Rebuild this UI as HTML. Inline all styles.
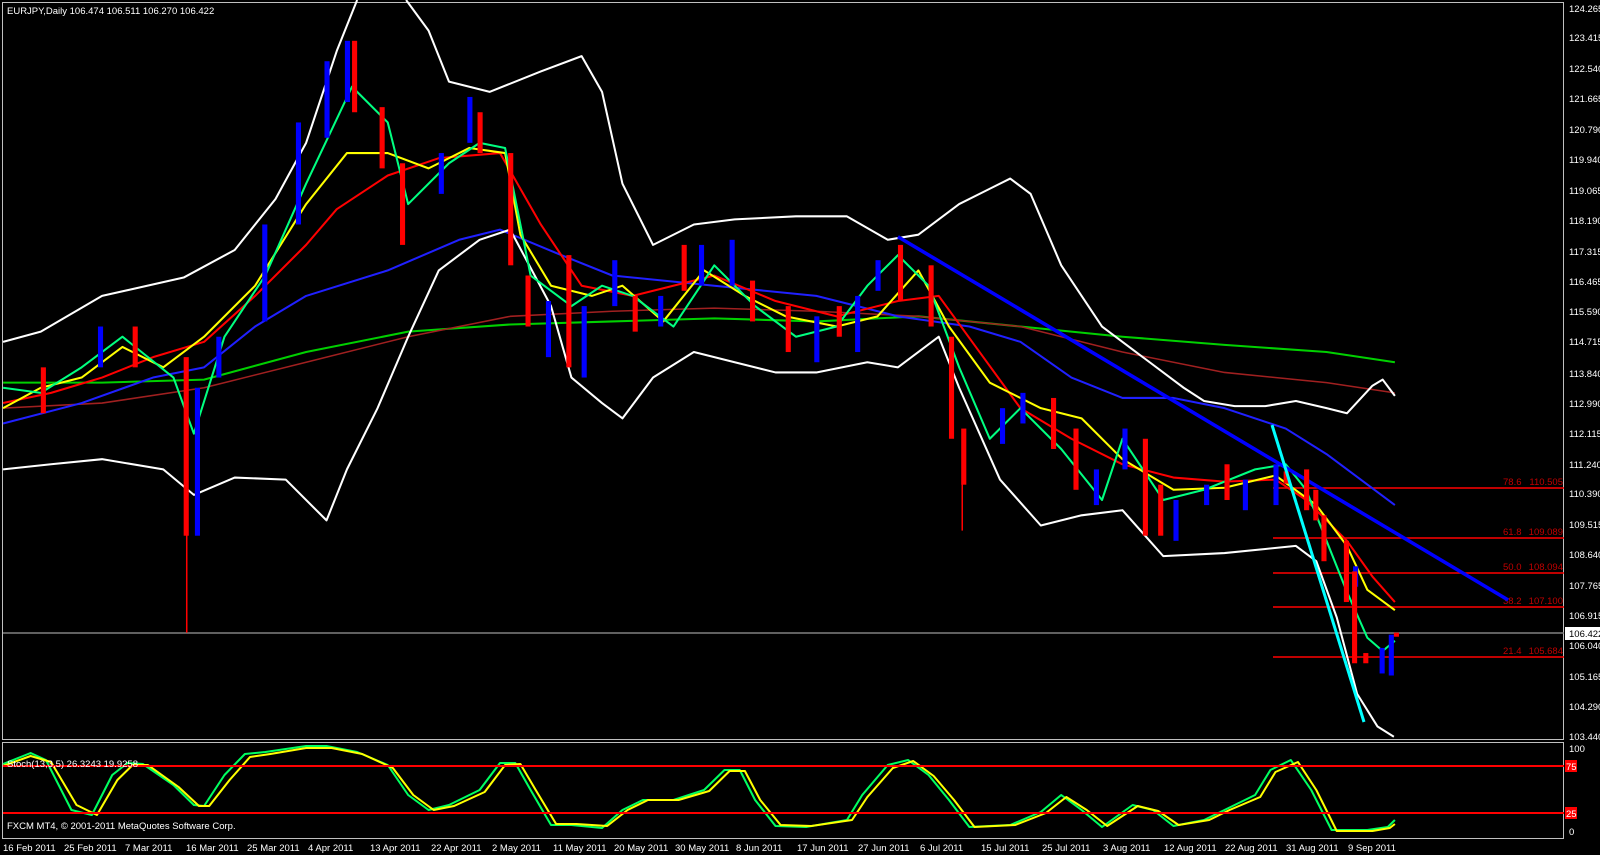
<!DOCTYPE html>
<html><head><meta charset="utf-8"><style>
html,body{margin:0;padding:0;background:#000;}
svg{display:block;}
text{font-family:"Liberation Sans",sans-serif;font-size:9.5px;fill:#fff;}
</style></head><body>
<svg width="1600" height="855" viewBox="0 0 1600 855" xmlns="http://www.w3.org/2000/svg">
<rect width="1600" height="855" fill="#000"/>
<rect x="2.5" y="2.5" width="1561" height="737" fill="none" stroke="#c0c0c0"/>
<rect x="2.5" y="742.5" width="1561" height="96" fill="none" stroke="#c0c0c0"/>
<line x1="3" y1="633" x2="1564" y2="633" stroke="#808080" stroke-width="1.5"/>
<g stroke="#ff0000" stroke-width="1.5">
<line x1="1273" y1="488" x2="1564" y2="488"/>
<line x1="1273" y1="538" x2="1564" y2="538"/>
<line x1="1273" y1="573" x2="1564" y2="573"/>
<line x1="1273" y1="607" x2="1564" y2="607"/>
<line x1="1273" y1="657" x2="1564" y2="657"/>
</g>
<g>
<text x="1503" y="485" style="fill:#c00000">78.6</text><text x="1563" y="485" text-anchor="end" style="fill:#c00000">110.505</text>
<text x="1503" y="535" style="fill:#c00000">61.8</text><text x="1563" y="535" text-anchor="end" style="fill:#c00000">109.089</text>
<text x="1503" y="570" style="fill:#c00000">50.0</text><text x="1563" y="570" text-anchor="end" style="fill:#c00000">108.094</text>
<text x="1503" y="604" style="fill:#c00000">38.2</text><text x="1563" y="604" text-anchor="end" style="fill:#c00000">107.100</text>
<text x="1503" y="654" style="fill:#c00000">21.4</text><text x="1563" y="654" text-anchor="end" style="fill:#c00000">105.684</text>
</g>
<g transform="scale(1.0204)">
<g fill="none" stroke-linejoin="round">
<polyline stroke="#00d000" stroke-width="2" points="3,375 100,375 200,372 300,345 400,325 500,318 600,315 700,312 800,315 900,310 950,315 1000,320 1100,330 1200,338 1300,345 1367,355"/>
<polyline stroke="#a02020" stroke-width="1.5" points="3,400 100,395 200,380 300,355 400,330 500,310 600,305 700,302 800,305 900,310 1000,320 1100,345 1200,365 1300,375 1367,385"/>
<polyline stroke="#2020ff" stroke-width="2" points="3,415 80,395 150,370 200,360 250,320 300,290 380,265 450,235 490,225 550,250 600,270 700,280 800,290 880,310 950,320 1000,335 1050,370 1100,390 1150,390 1200,400 1260,420 1300,445 1367,495"/>
<polyline stroke="#fff" stroke-width="2" points="3,335 40,325 100,290 180,272 230,245 270,195 300,140 330,50 350,0"/>
<polyline stroke="#fff" stroke-width="2" points="398,0 420,30 440,80 480,90 530,70 570,55 590,90 610,180 640,240 680,220 720,215 780,212 830,212 870,235 900,230 940,200 970,185 990,175 1010,190 1040,260 1080,320 1120,350 1160,380 1180,393 1210,398 1240,398 1270,393 1300,400 1320,405 1345,378 1355,372 1367,388"/>
<polyline stroke="#fff" stroke-width="2" points="3,460 50,455 100,450 160,460 190,485 230,468 280,470 320,510 340,460 370,400 400,330 430,265 470,235 500,225 540,300 560,370 590,395 610,410 640,370 680,345 720,355 760,365 800,365 850,355 880,360 920,330 940,380 980,470 1020,515 1060,505 1100,500 1140,545 1200,542 1240,538 1270,535 1290,550 1310,605 1330,680 1350,712 1366,722"/>
<polyline stroke="#ff0000" stroke-width="2" points="3,395 50,385 100,370 150,350 200,335 250,290 300,240 330,205 380,172 430,155 490,150 530,220 570,280 620,290 700,270 760,295 820,310 880,295 920,290 960,345 1000,400 1050,430 1100,455 1150,468 1200,472 1250,470 1280,490 1320,530 1345,565 1367,590"/>
<polyline stroke="#ffff00" stroke-width="2" points="3,400 40,380 80,370 120,340 160,360 200,330 250,280 300,200 340,150 380,150 420,165 460,145 495,150 510,230 540,280 580,290 610,280 650,315 690,265 730,290 770,310 820,320 860,310 900,265 930,320 970,375 1020,400 1060,410 1100,450 1150,480 1200,478 1250,466 1290,495 1320,535 1340,578 1367,598"/>
<polyline stroke="#00ff80" stroke-width="2" points="3,380 40,385 80,360 120,330 170,370 190,425 220,330 260,270 300,180 345,85 380,120 400,200 440,160 470,140 495,145 520,270 560,300 590,280 620,290 660,320 700,260 740,300 780,330 820,320 850,280 880,250 910,280 940,360 970,430 1000,400 1040,440 1080,490 1100,430 1140,490 1180,480 1230,460 1260,455 1280,480 1300,530 1320,580 1340,625 1355,638 1367,628"/>
<line x1="880" y1="232" x2="1478" y2="588" stroke="#0000ff" stroke-width="3.5"/>
</g>
<g fill="#0000ff">
<rect x="96" y="320" width="5" height="40"/><rect x="191" y="380" width="5" height="145"/><rect x="212" y="330" width="5" height="40"/><rect x="257" y="220" width="5" height="95"/><rect x="290" y="120" width="5" height="100"/><rect x="318" y="60" width="5" height="75"/><rect x="338" y="40" width="5" height="60"/><rect x="430" y="150" width="5" height="40"/><rect x="458" y="95" width="5" height="45"/><rect x="535" y="295" width="5" height="55"/><rect x="570" y="300" width="5" height="70"/><rect x="600" y="255" width="5" height="45"/><rect x="645" y="290" width="5" height="30"/><rect x="685" y="240" width="5" height="40"/><rect x="715" y="235" width="5" height="45"/><rect x="798" y="310" width="5" height="45"/><rect x="838" y="290" width="5" height="55"/><rect x="858" y="255" width="5" height="30"/><rect x="980" y="400" width="5" height="35"/><rect x="1000" y="385" width="5" height="30"/><rect x="1072" y="460" width="5" height="35"/><rect x="1100" y="420" width="5" height="40"/><rect x="1150" y="490" width="5" height="40"/><rect x="1180" y="475" width="5" height="20"/><rect x="1218" y="470" width="5" height="30"/><rect x="1248" y="455" width="5" height="40"/><rect x="1326" y="555" width="5" height="20"/><rect x="1352" y="635" width="5" height="25"/><rect x="1361" y="622" width="5" height="40"/>
</g>
<g fill="#ff0000">
<rect x="40" y="360" width="5" height="45"/><rect x="130" y="320" width="5" height="40"/><rect x="180" y="350" width="5" height="175"/><rect x="345" y="40" width="5" height="70"/><rect x="372" y="105" width="5" height="60"/><rect x="392" y="160" width="5" height="80"/><rect x="468" y="110" width="5" height="40"/><rect x="498" y="150" width="5" height="110"/><rect x="515" y="270" width="5" height="50"/><rect x="555" y="250" width="5" height="110"/><rect x="620" y="290" width="5" height="35"/><rect x="668" y="240" width="5" height="45"/><rect x="735" y="275" width="5" height="40"/><rect x="770" y="300" width="5" height="45"/><rect x="820" y="300" width="5" height="30"/><rect x="880" y="240" width="5" height="55"/><rect x="910" y="260" width="5" height="60"/><rect x="930" y="330" width="5" height="100"/><rect x="942" y="420" width="5" height="55"/><rect x="1030" y="390" width="5" height="50"/><rect x="1052" y="420" width="5" height="60"/><rect x="1120" y="430" width="5" height="95"/><rect x="1135" y="475" width="5" height="50"/><rect x="1200" y="455" width="5" height="35"/><rect x="1258" y="462" width="5" height="12"/><rect x="1278" y="460" width="5" height="40"/><rect x="1287" y="480" width="5" height="30"/><rect x="1295" y="505" width="5" height="45"/><rect x="1317" y="530" width="5" height="60"/><rect x="1325" y="560" width="5" height="90"/><rect x="1336" y="640" width="5" height="10"/><rect x="1366" y="620" width="5" height="4"/>
</g>
<line x1="183" y1="520" x2="183" y2="620" stroke="#ff0000" stroke-width="1.5"/>
<line x1="943" y1="470" x2="943" y2="520" stroke="#ff0000" stroke-width="1.5"/>
</g>
<g transform="scale(1.0204,1)" fill="none" stroke-width="2" stroke-linejoin="round">
<polyline stroke="#00ff60" points="3,764 30,753 45,760 70,810 90,815 110,775 125,763 140,764 170,785 190,805 200,806 220,775 240,754 260,752 300,746 320,746 350,752 380,765 400,795 420,810 440,805 470,790 490,763 505,763 520,790 540,825 560,825 590,828 610,810 630,800 660,800 690,790 710,770 725,770 740,800 760,826 790,827 830,820 845,795 870,765 890,760 910,775 930,800 950,827 990,825 1020,812 1040,795 1060,810 1080,827 1110,805 1130,810 1150,826 1180,820 1200,810 1230,795 1245,770 1265,760 1285,790 1305,830 1340,830 1360,827 1367,820"/>
<polyline stroke="#ffff00" points="3,766 30,756 50,762 75,805 95,815 115,780 130,765 145,765 175,787 195,806 205,806 225,780 245,757 265,754 300,748 325,748 355,754 385,768 405,795 425,810 445,806 475,792 495,765 510,764 525,790 545,824 565,824 595,826 615,810 635,800 665,800 695,791 715,771 730,771 745,800 765,825 795,826 835,820 850,797 875,768 895,761 915,776 935,800 955,827 995,825 1025,813 1045,797 1065,810 1085,826 1115,806 1135,811 1155,825 1185,820 1205,810 1235,797 1250,772 1272,762 1290,790 1310,831 1345,831 1362,828 1367,824"/>
</g>
<line x1="1272" y1="425" x2="1364" y2="722" stroke="#00ffff" stroke-width="3"/>
<g>
<text x="1569" y="12">124.265</text><text x="1569" y="41">123.415</text><text x="1569" y="72">122.540</text><text x="1569" y="102">121.665</text><text x="1569" y="133">120.790</text><text x="1569" y="163">119.940</text><text x="1569" y="194">119.065</text><text x="1569" y="224">118.190</text><text x="1569" y="255">117.315</text><text x="1569" y="285">116.465</text><text x="1569" y="315">115.590</text><text x="1569" y="345">114.715</text><text x="1569" y="377">113.840</text><text x="1569" y="407">112.990</text><text x="1569" y="437">112.115</text><text x="1569" y="468">111.240</text><text x="1569" y="497">110.390</text><text x="1569" y="528">109.515</text><text x="1569" y="558">108.640</text><text x="1569" y="589">107.765</text><text x="1569" y="619">106.915</text><text x="1569" y="649">106.040</text><text x="1569" y="680">105.165</text><text x="1569" y="710">104.290</text><text x="1569" y="740">103.440</text>
<rect x="1565" y="627" width="35" height="13" fill="#fff"/><text x="1569" y="637" style="fill:#000">106.422</text>
</g>
<text x="7" y="14">EURJPY,Daily  106.474 106.511 106.270 106.422</text>
<line x1="3" y1="766" x2="1564" y2="766" stroke="#ff0000" stroke-width="2"/>
<line x1="3" y1="813" x2="1564" y2="813" stroke="#ff0000" stroke-width="2"/>
<text x="7" y="767">Stoch(13,3,5) 26.3243 19.9258</text>
<text x="7" y="829">FXCM MT4, © 2001-2011 MetaQuotes Software Corp.</text>
<text x="1569" y="752">100</text><text x="1569" y="835">0</text>
<rect x="1565" y="760" width="12" height="12" fill="#ff0000"/><text x="1566" y="770">75</text>
<rect x="1565" y="807" width="12" height="12" fill="#ff0000"/><text x="1566" y="817">25</text>
<g>
<text x="3" y="851">16 Feb 2011</text><text x="64" y="851">25 Feb 2011</text><text x="125" y="851">7 Mar 2011</text><text x="186" y="851">16 Mar 2011</text><text x="247" y="851">25 Mar 2011</text><text x="308" y="851">4 Apr 2011</text><text x="370" y="851">13 Apr 2011</text><text x="431" y="851">22 Apr 2011</text><text x="492" y="851">2 May 2011</text><text x="553" y="851">11 May 2011</text><text x="614" y="851">20 May 2011</text><text x="675" y="851">30 May 2011</text><text x="736" y="851">8 Jun 2011</text><text x="797" y="851">17 Jun 2011</text><text x="858" y="851">27 Jun 2011</text><text x="920" y="851">6 Jul 2011</text><text x="981" y="851">15 Jul 2011</text><text x="1042" y="851">25 Jul 2011</text><text x="1103" y="851">3 Aug 2011</text><text x="1164" y="851">12 Aug 2011</text><text x="1225" y="851">22 Aug 2011</text><text x="1286" y="851">31 Aug 2011</text><text x="1348" y="851">9 Sep 2011</text>
</g>
</svg>
</body></html>
